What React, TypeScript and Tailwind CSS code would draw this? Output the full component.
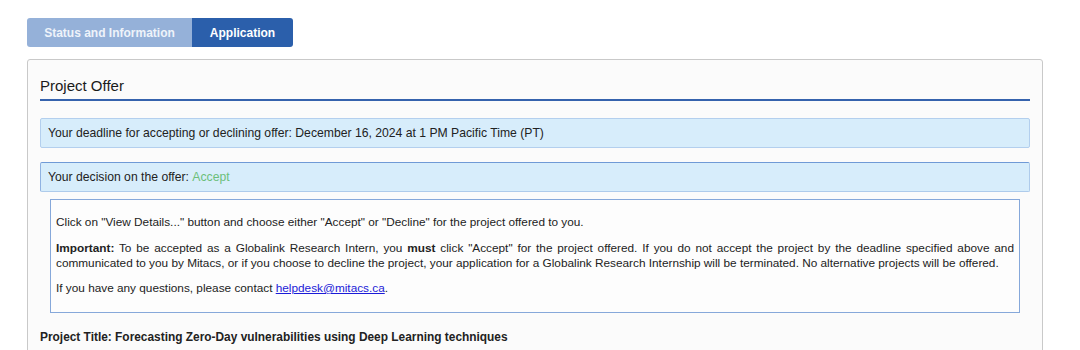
const font = { fontFamily: '"Liberation Sans", Arial, sans-serif' }

function Tabs() {
  return (
    <div className="flex h-[29px] text-[12px] font-bold">
      <div className="flex items-center justify-center w-[165px] bg-[#95b1d9] text-[#eef3fa] rounded-l-[3px]">
        Status and Information
      </div>
      <div className="flex items-center justify-center w-[101px] bg-[#2b5fab] text-white rounded-r-[3px]">
        Application
      </div>
    </div>
  )
}

function Notice({ children, strong }: { children: React.ReactNode; strong?: boolean }) {
  return (
    <div
      className={
        "h-[30px] flex items-center px-[7px] bg-[#d7edfb] border rounded-[2px] " +
        (strong
          ? "border-[#aecbeb] border-t-[#6f9ad6] border-l-[#8fb2e2]"
          : "border-[#b3cfee]")
      }
    >
      {children}
    </div>
  )
}

export default function App() {
  return (
    <div className="bg-white w-[1080px] h-[350px] overflow-hidden text-[12.2px] text-[#222]" style={font}>
      <div className="pl-[27px] pt-[18px]">
        <Tabs />
      </div>

      <div className="ml-[27px] mt-[12px] w-[1016px] h-[320px] bg-[#fbfbfb] border border-[#c9c9c9] rounded-[3px] px-[12px] pt-[16px]">
        <div className="text-[15px] text-[#1a1a1a] leading-[20px] pb-[3px] border-b-2 border-[#3562ad]">
          Project Offer
        </div>

        <div className="mt-[17px]">
          <Notice>Your deadline for accepting or declining offer: December 16, 2024 at 1 PM Pacific Time (PT)</Notice>
        </div>

        <div className="mt-[14px]">
          <Notice strong>
            Your decision on the offer:&nbsp;<span className="text-[#6cbf7a]">Accept</span>
          </Notice>
        </div>

        {/* instructions */}
        <div className="mx-[10px] mt-[7px] border border-[#86a8da] bg-[#fdfdfd] px-[5px] pt-[15px] pb-[16px] text-[11.8px] leading-[15px] text-justify">
          <p>Click on "View Details..." button and choose either "Accept" or "Decline" for the project offered to you.</p>
          <p className="mt-[11px]">
            <b>Important:</b> To be accepted as a Globalink Research Intern, you <b>must</b> click "Accept" for the project offered. If you do not accept the project by the deadline specified above and communicated to you by Mitacs, or if you choose to decline the project, your application for a Globalink Research Internship will be terminated. No alternative projects will be offered.
          </p>
          <p className="mt-[10px]">
            If you have any questions, please contact{" "}
            <a href="#" className="text-[#1b1bd8] underline">helpdesk@mitacs.ca</a>.
          </p>
        </div>

        <div className="mt-[17px] font-bold text-[11.9px] leading-[15px]">
          Project Title: Forecasting Zero-Day vulnerabilities using Deep Learning techniques
        </div>
      </div>
    </div>
  )
}
